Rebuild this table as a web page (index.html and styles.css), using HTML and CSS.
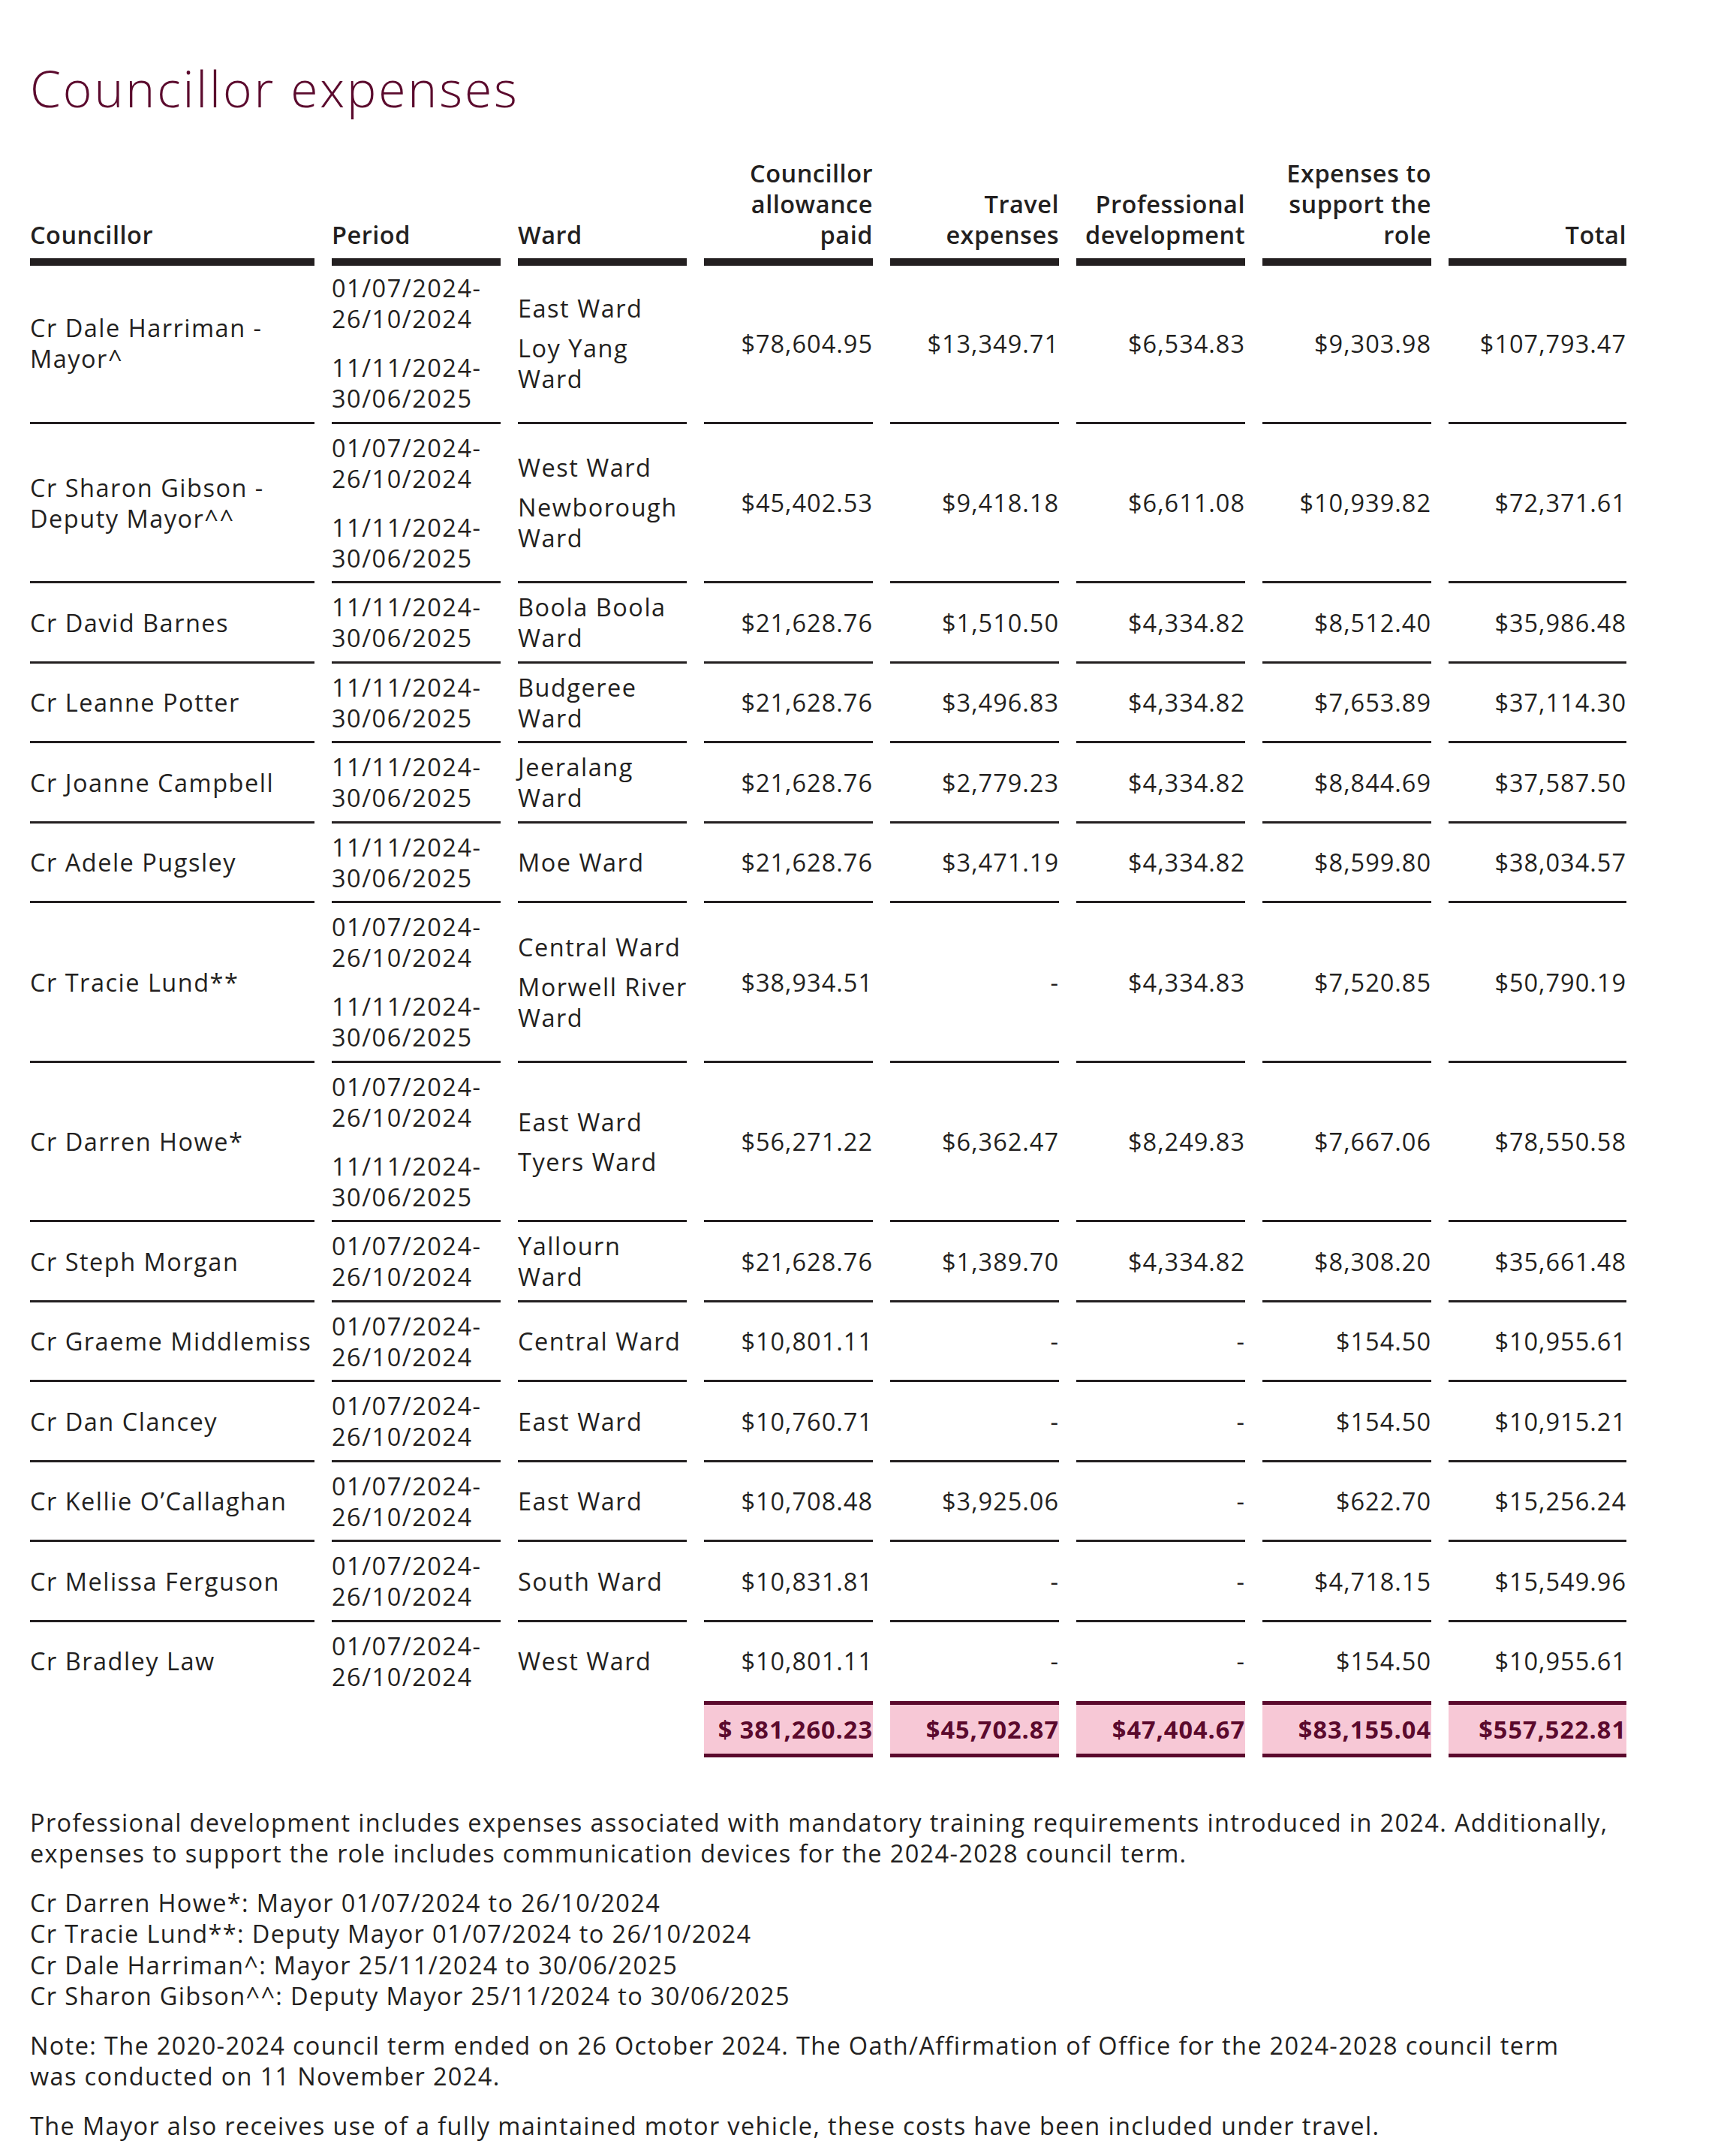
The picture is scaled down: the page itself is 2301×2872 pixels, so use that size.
FILE: index.html
```html
<!DOCTYPE html>
<html lang="en">
<head>
<meta charset="utf-8">
<title>Councillor expenses</title>
<link rel="stylesheet" href="styles.css">
</head>
<body>
<main class="page">
  <h1 class="title">Councillor expenses</h1>
  <div class="table-wrap">
    <table class="expenses">
      <colgroup>
        <col class="c-name"><col class="c-mid"><col class="c-mid"><col class="c-mid"><col class="c-mid"><col class="c-mid"><col class="c-mid"><col class="c-total">
      </colgroup>
      <thead>
        <tr>
          <th class="l">Councillor</th>
          <th class="l">Period</th>
          <th class="l">Ward</th>
          <th class="r">Councillor<br>allowance<br>paid</th>
          <th class="r">Travel<br>expenses</th>
          <th class="r">Professional<br>development</th>
          <th class="r">Expenses to<br>support the<br>role</th>
          <th class="r">Total</th>
        </tr>
      </thead>
      <tbody>
        <tr>
          <td class="txt">Cr Dale Harriman -<br>Mayor^</td>
          <td class="txt period"><p>01/07/2024-<br>26/10/2024</p><p>11/11/2024-<br>30/06/2025</p></td>
          <td class="txt ward"><p>East Ward</p><p>Loy Yang<br>Ward</p></td>
          <td class="num">$78,604.95</td><td class="num">$13,349.71</td><td class="num">$6,534.83</td><td class="num">$9,303.98</td><td class="num">$107,793.47</td>
        </tr>
        <tr>
          <td class="txt">Cr Sharon Gibson -<br>Deputy Mayor^^</td>
          <td class="txt period"><p>01/07/2024-<br>26/10/2024</p><p>11/11/2024-<br>30/06/2025</p></td>
          <td class="txt ward"><p>West Ward</p><p>Newborough<br>Ward</p></td>
          <td class="num">$45,402.53</td><td class="num">$9,418.18</td><td class="num">$6,611.08</td><td class="num">$10,939.82</td><td class="num">$72,371.61</td>
        </tr>
        <tr>
          <td class="txt">Cr David Barnes</td>
          <td class="txt">11/11/2024-<br>30/06/2025</td>
          <td class="txt">Boola Boola<br>Ward</td>
          <td class="num">$21,628.76</td><td class="num">$1,510.50</td><td class="num">$4,334.82</td><td class="num">$8,512.40</td><td class="num">$35,986.48</td>
        </tr>
        <tr>
          <td class="txt">Cr Leanne Potter</td>
          <td class="txt">11/11/2024-<br>30/06/2025</td>
          <td class="txt">Budgeree<br>Ward</td>
          <td class="num">$21,628.76</td><td class="num">$3,496.83</td><td class="num">$4,334.82</td><td class="num">$7,653.89</td><td class="num">$37,114.30</td>
        </tr>
        <tr>
          <td class="txt">Cr Joanne Campbell</td>
          <td class="txt">11/11/2024-<br>30/06/2025</td>
          <td class="txt">Jeeralang<br>Ward</td>
          <td class="num">$21,628.76</td><td class="num">$2,779.23</td><td class="num">$4,334.82</td><td class="num">$8,844.69</td><td class="num">$37,587.50</td>
        </tr>
        <tr>
          <td class="txt">Cr Adele Pugsley</td>
          <td class="txt">11/11/2024-<br>30/06/2025</td>
          <td class="txt">Moe Ward</td>
          <td class="num">$21,628.76</td><td class="num">$3,471.19</td><td class="num">$4,334.82</td><td class="num">$8,599.80</td><td class="num">$38,034.57</td>
        </tr>
        <tr>
          <td class="txt">Cr Tracie Lund**</td>
          <td class="txt period"><p>01/07/2024-<br>26/10/2024</p><p>11/11/2024-<br>30/06/2025</p></td>
          <td class="txt ward"><p>Central Ward</p><p>Morwell River<br>Ward</p></td>
          <td class="num">$38,934.51</td><td class="num">-</td><td class="num">$4,334.83</td><td class="num">$7,520.85</td><td class="num">$50,790.19</td>
        </tr>
        <tr>
          <td class="txt">Cr Darren Howe*</td>
          <td class="txt period"><p>01/07/2024-<br>26/10/2024</p><p>11/11/2024-<br>30/06/2025</p></td>
          <td class="txt ward"><p>East Ward</p><p>Tyers Ward</p></td>
          <td class="num">$56,271.22</td><td class="num">$6,362.47</td><td class="num">$8,249.83</td><td class="num">$7,667.06</td><td class="num">$78,550.58</td>
        </tr>
        <tr>
          <td class="txt">Cr Steph Morgan</td>
          <td class="txt">01/07/2024-<br>26/10/2024</td>
          <td class="txt">Yallourn<br>Ward</td>
          <td class="num">$21,628.76</td><td class="num">$1,389.70</td><td class="num">$4,334.82</td><td class="num">$8,308.20</td><td class="num">$35,661.48</td>
        </tr>
        <tr>
          <td class="txt">Cr Graeme Middlemiss</td>
          <td class="txt">01/07/2024-<br>26/10/2024</td>
          <td class="txt">Central Ward</td>
          <td class="num">$10,801.11</td><td class="num">-</td><td class="num">-</td><td class="num">$154.50</td><td class="num">$10,955.61</td>
        </tr>
        <tr>
          <td class="txt">Cr Dan Clancey</td>
          <td class="txt">01/07/2024-<br>26/10/2024</td>
          <td class="txt">East Ward</td>
          <td class="num">$10,760.71</td><td class="num">-</td><td class="num">-</td><td class="num">$154.50</td><td class="num">$10,915.21</td>
        </tr>
        <tr>
          <td class="txt">Cr Kellie O’Callaghan</td>
          <td class="txt">01/07/2024-<br>26/10/2024</td>
          <td class="txt">East Ward</td>
          <td class="num">$10,708.48</td><td class="num">$3,925.06</td><td class="num">-</td><td class="num">$622.70</td><td class="num">$15,256.24</td>
        </tr>
        <tr>
          <td class="txt">Cr Melissa Ferguson</td>
          <td class="txt">01/07/2024-<br>26/10/2024</td>
          <td class="txt">South Ward</td>
          <td class="num">$10,831.81</td><td class="num">-</td><td class="num">-</td><td class="num">$4,718.15</td><td class="num">$15,549.96</td>
        </tr>
        <tr>
          <td class="txt">Cr Bradley Law</td>
          <td class="txt">01/07/2024-<br>26/10/2024</td>
          <td class="txt">West Ward</td>
          <td class="num">$10,801.11</td><td class="num">-</td><td class="num">-</td><td class="num">$154.50</td><td class="num">$10,955.61</td>
        </tr>
      </tbody>
      <tfoot>
        <tr>
          <td class="blank"></td><td class="blank"></td><td class="blank"></td>
          <td class="sum">$ 381,260.23</td><td class="sum">$45,702.87</td><td class="sum">$47,404.67</td><td class="sum">$83,155.04</td><td class="sum">$557,522.81</td>
        </tr>
      </tfoot>
    </table>
  </div>
  <section class="notes">
    <p>Professional development includes expenses associated with mandatory training requirements introduced in 2024. Additionally,<br>expenses to support the role includes communication devices for the 2024-2028 council term.</p>
    <p>Cr Darren Howe*: Mayor 01/07/2024 to 26/10/2024<br>Cr Tracie Lund**: Deputy Mayor 01/07/2024 to 26/10/2024<br>Cr Dale Harriman^: Mayor 25/11/2024 to 30/06/2025<br>Cr Sharon Gibson^^: Deputy Mayor 25/11/2024 to 30/06/2025</p>
    <p>Note: The 2020-2024 council term ended on 26 October 2024. The Oath/Affirmation of Office for the 2024-2028 council term<br>was conducted on 11 November 2024.</p>
    <p>The Mayor also receives use of a fully maintained motor vehicle, these costs have been included under travel.</p>
  </section>
</main>
</body>
</html>
```
FILE: styles.css
```css
html, body {
  margin: 0;
  padding: 0;
  background: #ffffff;
}

body {
  color: #231f20;
  font-family: "Open Sans", "Liberation Sans", sans-serif;
}

.page {
  padding: 84px 0 0 40px;
}

.title {
  margin: 0;
  font-size: 66px;
  line-height: 66px;
  font-weight: 300;
  letter-spacing: 2.9px;
  color: #5b0a2d;
}

.table-wrap {
  margin: 60px 0 0 -23px;
}

.expenses {
  border-collapse: separate;
  border-spacing: 23px 0;
  table-layout: fixed;
  width: 2173px;
  font-size: 32.5px;
  line-height: 41px;
}

.c-name { width: 379px; }
.c-mid { width: 225px; }
.c-total { width: 237px; }

.expenses th {
  padding: 0 0 11px;
  border-bottom: 10px solid #231f20;
  vertical-align: bottom;
  font-weight: 600;
  letter-spacing: 0.5px;
  white-space: nowrap;
}

.expenses th.l { text-align: left; }
.expenses th.r { text-align: right; }

.expenses td {
  padding: 10.75px 0;
  border-bottom: 3px solid #231f20;
  vertical-align: middle;
  white-space: nowrap;
}

.expenses tbody tr:first-child td { padding-top: 9px; }
.expenses tbody tr:last-child td {
  padding-bottom: 9px;
  border-bottom-color: transparent;
}

.txt {
  text-align: left;
  letter-spacing: 1.5px;
}

.num {
  text-align: right;
  letter-spacing: 1px;
}

.expenses td p { margin: 0; }
.period p + p { margin-top: 24px; }
.ward p + p { margin-top: 12px; }

.expenses tfoot td.blank {
  border: 0;
  padding: 0;
}

.expenses tfoot td.sum {
  padding: 12px 0;
  background: #f7c8d6;
  border-top: 5px solid #5b0a2d;
  border-bottom: 5px solid #5b0a2d;
  color: #5b0a2d;
  font-weight: 700;
  text-align: right;
  letter-spacing: 1px;
}

.notes {
  margin-top: 66px;
  font-size: 32.5px;
  line-height: 41.5px;
  letter-spacing: 1.35px;
  white-space: nowrap;
}

.notes p { margin: 0 0 24px; }
```
